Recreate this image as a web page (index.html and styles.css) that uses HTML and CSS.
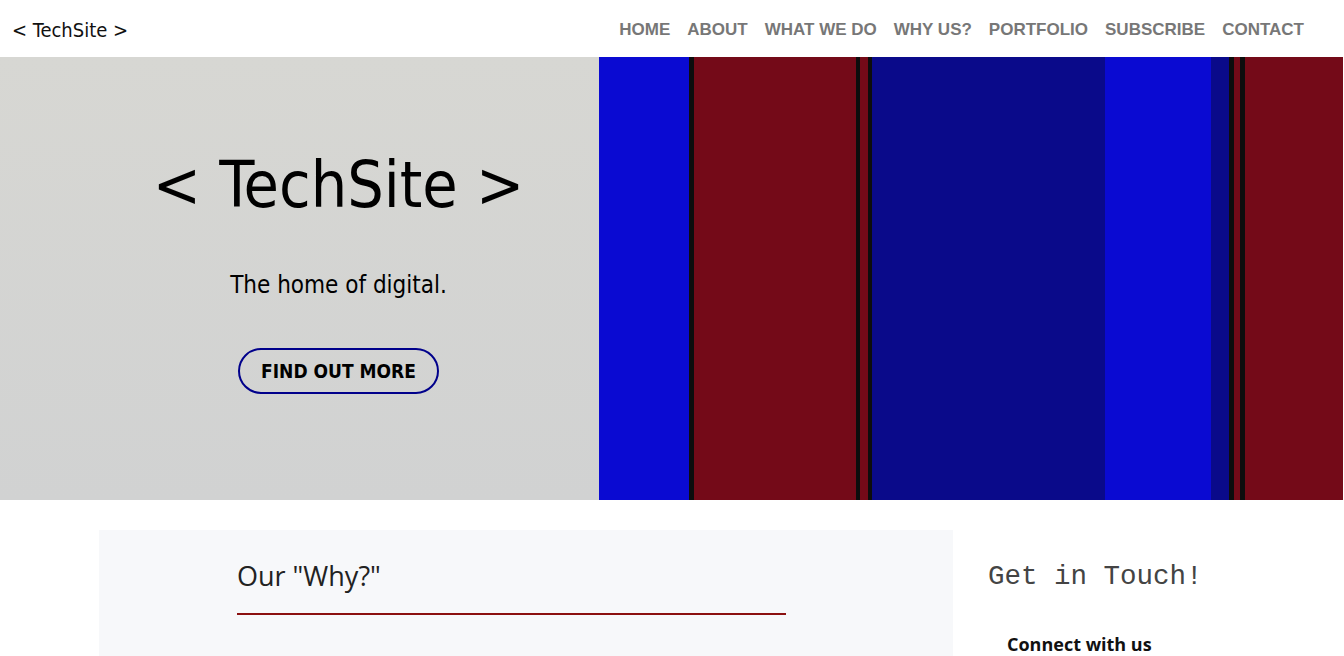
FILE: index.html
```html
<!DOCTYPE html>
<html lang="en">
<head>
<meta charset="utf-8">
<title>TechSite</title>
<link rel="stylesheet" href="styles.css">
</head>
<body>
<header class="topbar">
  <a class="brand" href="#">&lt; TechSite &gt;</a>
  <nav class="nav">
    <a href="#">HOME</a>
    <a href="#">ABOUT</a>
    <a href="#">WHAT WE DO</a>
    <a href="#">WHY US?</a>
    <a href="#">PORTFOLIO</a>
    <a href="#">SUBSCRIBE</a>
    <a href="#">CONTACT</a>
  </nav>
</header>
<section class="hero">
  <div class="hero-text">
    <h1 class="hero-title">&lt; TechSite &gt;</h1>
    <p class="hero-sub">The home of digital.</p>
    <a class="hero-btn" href="#">FIND OUT MORE</a>
  </div>
  <div class="hero-art" aria-hidden="true"></div>
</section>
<main class="content">
  <div class="why">
    <h2 class="why-title">Our "Why?"</h2>
    <div class="why-rule"></div>
  </div>
  <aside class="touch">
    <h2 class="touch-title">Get in Touch!</h2>
    <h3 class="touch-sub">Connect with us</h3>
  </aside>
</main>
</body>
</html>
```
FILE: styles.css
```css
* { box-sizing: border-box; }
html, body { margin: 0; padding: 0; }
body {
  background: #fff;
  font-family: "DejaVu Sans Condensed", "DejaVu Sans", sans-serif;
  color: #000;
  overflow: hidden;
}
a { text-decoration: none; color: inherit; }

.topbar {
  height: 57px;
  display: flex;
  align-items: center;
  justify-content: space-between;
  padding: 0 40px 0 12px;
}
.brand {
  font-size: 20px;
  color: #111;
  padding-top: 3px;
}
.nav {
  display: flex;
  gap: 17px;
  font-family: "Liberation Sans", Arial, sans-serif;
  font-weight: bold;
  font-size: 17px;
  color: #777;
  padding-top: 3px;
}

.hero {
  display: grid;
  grid-template-columns: 599px 1fr;
  height: 443px;
}
.hero-text {
  background: linear-gradient(#d7d7d3, #d1d2d2);
  padding-left: 78px;
  display: flex;
  flex-direction: column;
  align-items: center;
  padding-top: 90px;
}
.hero-title {
  margin: 0;
  font-weight: normal;
  font-size: 64px;
  line-height: 76px;
}
.hero-sub {
  margin: 47px 0 0;
  font-size: 24px;
  line-height: 30px;
}
.hero-btn {
  margin-top: 48px;
  width: 201px;
  height: 46px;
  border: 2px solid #00008b;
  border-radius: 24px;
  display: flex;
  align-items: center;
  justify-content: center;
  font-weight: bold;
  font-size: 19px;
}
.hero-art {
  background: linear-gradient(to right,
    #0a0ad2 0, #0a0ad2 90px,
    #0d0d0d 90px, #0d0d0d 95px,
    #740a18 95px, #740a18 257px,
    #0d0d0d 257px, #0d0d0d 261px,
    #740a18 261px, #740a18 269px,
    #0d0d0d 269px, #0d0d0d 273px,
    #0a0a8a 273px, #0a0a8a 506px,
    #0a0ad2 506px, #0a0ad2 612px,
    #0a0a8a 612px, #0a0a8a 630px,
    #0d0d0d 630px, #0d0d0d 635px,
    #740a18 635px, #740a18 641px,
    #0d0d0d 641px, #0d0d0d 646px,
    #740a18 646px, #740a18 744px,
    #fff 744px);
}

.content {
  width: 1146px;
  margin: 30px 0 0 99px;
  display: grid;
  grid-template-columns: 854px 292px;
}
.why {
  background: #f7f8fa;
  padding: 27px 0 200px 138px;
}
.why-title {
  margin: 0;
  font-family: "Open Sans", "DejaVu Sans", sans-serif;
  font-weight: normal;
  font-size: 27px;
  line-height: 38px;
  color: #222;
}
.why-rule {
  margin-top: 18px;
  width: 549px;
  height: 2px;
  background: #8b1010;
}
.touch {
  padding: 30px 0 0 35px;
}
.touch-title {
  margin: 0;
  font-family: "Liberation Mono", "Courier New", monospace;
  font-weight: normal;
  font-size: 27.5px;
  line-height: 34px;
  color: #444;
}
.touch-sub {
  margin: 38px 0 0 19px;
  font-family: "Open Sans", sans-serif;
  font-weight: bold;
  font-size: 18px;
  line-height: 24px;
  color: #111;
}
```
